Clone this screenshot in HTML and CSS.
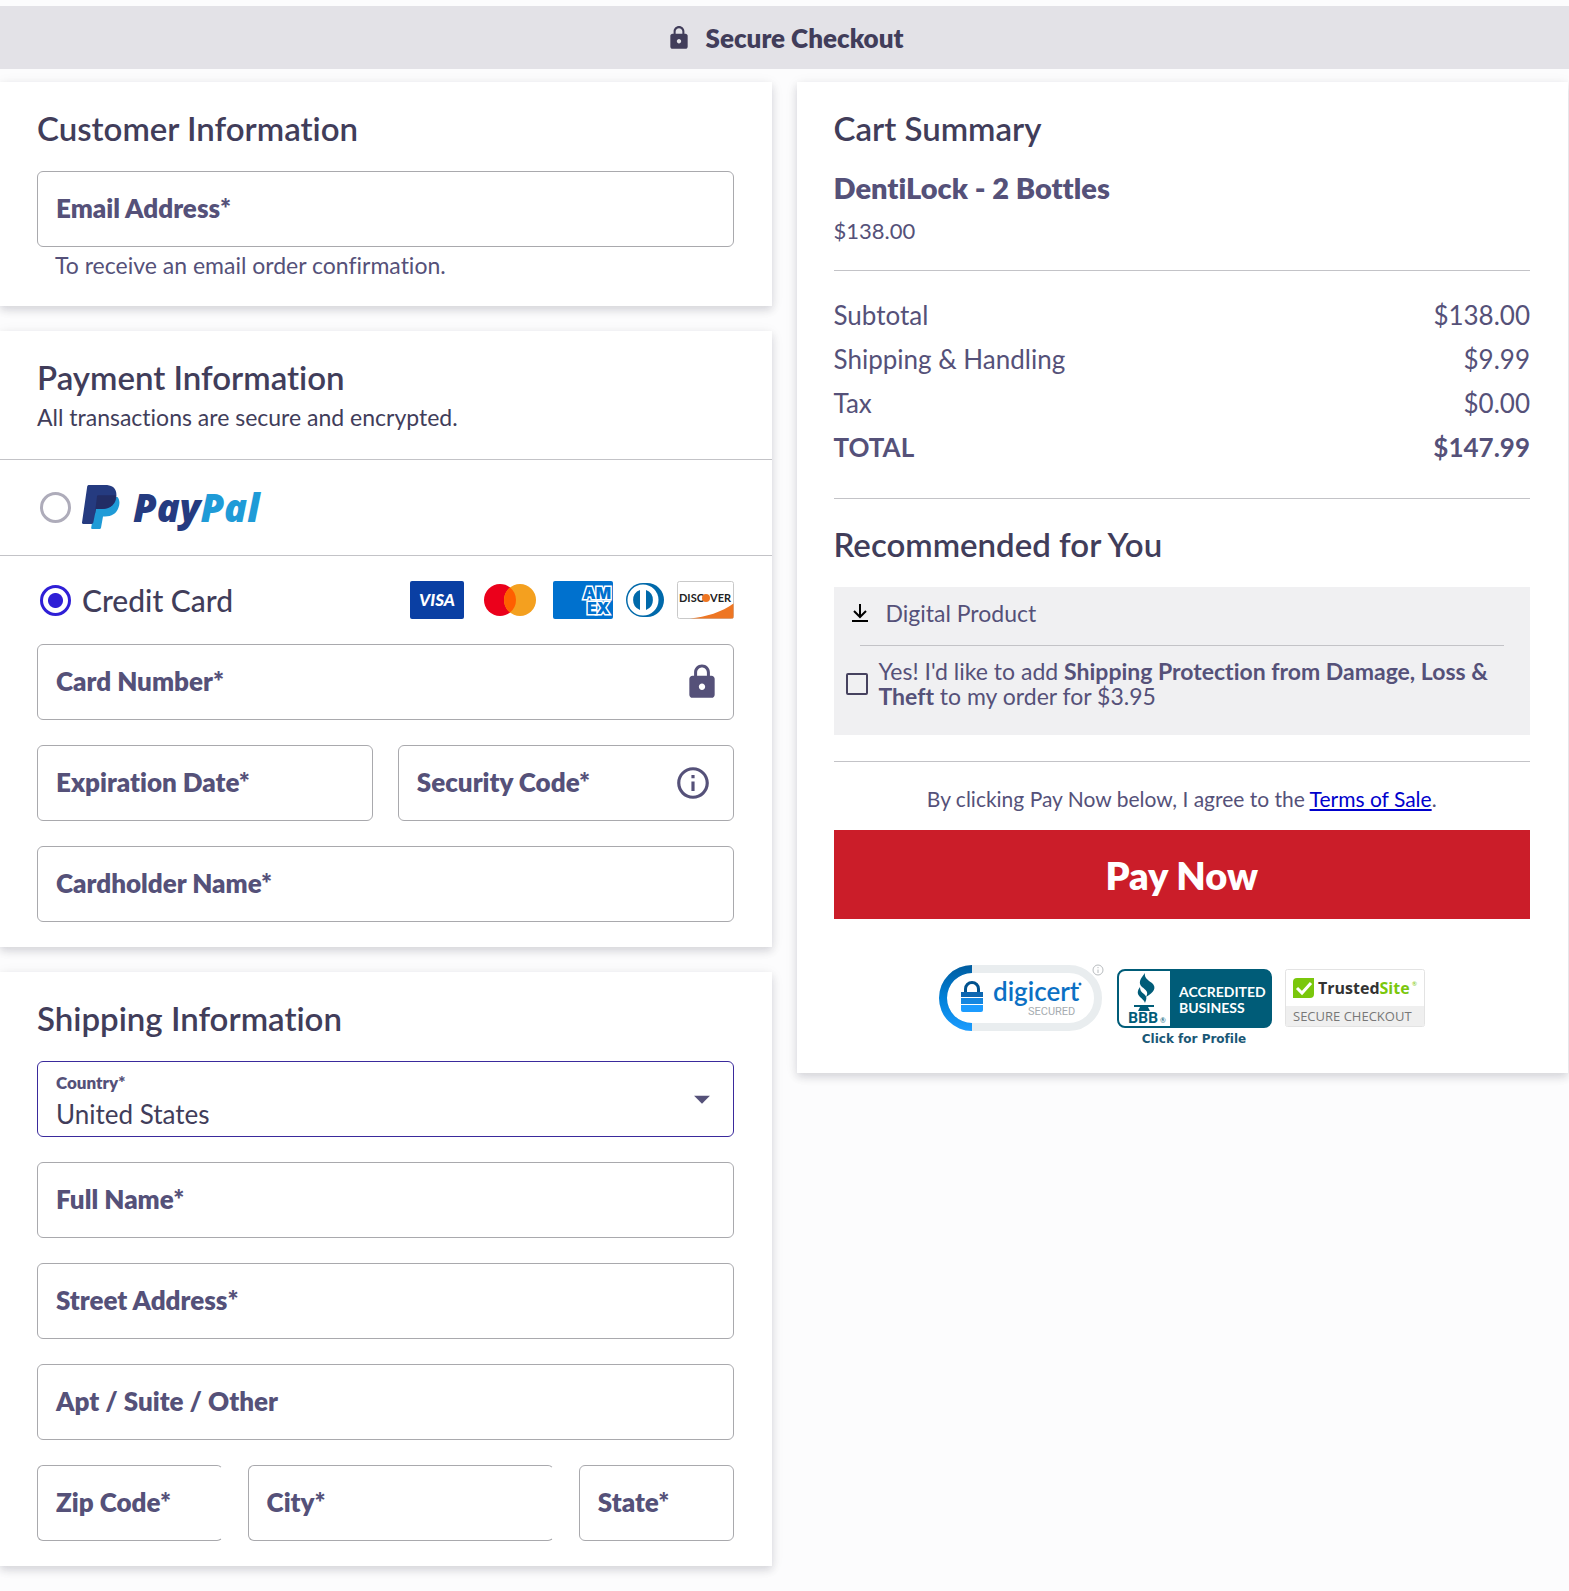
FILE: index.html
```html
<!DOCTYPE html>
<html lang="en">
<head>
  <meta charset="UTF-8">
  <meta name="viewport" content="width=device-width, initial-scale=1.0">
  <title>Secure Checkout</title>
  <link rel="stylesheet" href="styles.css">
</head>
<body>
  <header class="top-bar">
    <svg class="top-lock" viewBox="0 0 24 24" aria-hidden="true"><path fill="currentColor" d="M18 8h-1V6c0-2.76-2.24-5-5-5S7 3.24 7 6v2H6c-1.1 0-2 .9-2 2v10c0 1.1.9 2 2 2h12c1.1 0 2-.9 2-2V10c0-1.1-.9-2-2-2zm-6 9c-1.1 0-2-.9-2-2s.9-2 2-2 2 .9 2 2-.9 2-2 2zm3.1-9H8.9V6c0-1.71 1.39-3.1 3.1-3.1 1.71 0 3.1 1.39 3.1 3.1v2z"/></svg>
    <span>Secure Checkout</span>
  </header>

  <form class="checkout">
    <div class="column">
      <!-- Customer -->
      <section class="card">
        <h2>Customer Information</h2>
        <div class="field">
          <input type="email" id="email" required>
          <label for="email">Email Address*</label>
        </div>
        <p class="helper">To receive an email order confirmation.</p>
      </section>

      <!-- Payment -->
      <section class="card">
        <h2 class="tight">Payment Information</h2>
        <p class="subtitle">All transactions are secure and encrypted.</p>

        <div class="method method-paypal">
          <input type="radio" name="method" id="paypal" value="paypal">
          <label for="paypal" aria-label="PayPal">
            <svg width="190" height="46" viewBox="0 0 190 46">
              <path fill="#1f9bd7" d="M14 12h21.500c2.500 3 2.300 7 1 10.500-2 6-6.500 9-13.500 9h-2l-2 11.200c-.2.900-.8 1.300-1.600 1.300h-7.200c-.8 0-1.200-.5-1-1.300z"/>
              <path fill="#253b80" d="M7 0h16c6 0 10.500 2.300 11.200 7.500 1.500 10-4.700 16.500-14.700 16.500h-5.500l-2.700 13.600c-.2.900-.8 1.400-1.700 1.400H1.200C.4 39-.1 38.400 0 37.600L5.200 1.500C5.400.5 6.100 0 7 0z"/>
              <path fill="#222d65" d="M16 10.200h17.800c.5 8-4.800 13.800-14.300 13.800h-5.500l-1.300 6L15 11.300c.1-.7.4-1.100 1-1.100z"/>
              <text class="paypal-text" x="51" y="37" fill="#253b80">Pay<tspan fill="#1f9bd7">Pal</tspan></text>
            </svg>
          </label>
        </div>

        <div class="method">
          <input type="radio" name="method" id="credit" value="credit" checked>
          <label for="credit">Credit Card</label>
          <div class="brands">
            <svg width="54" height="38" viewBox="0 0 54 38">
              <rect width="54" height="38" rx="2" fill="#0a3fa3"/>
              <text class="visa-text" x="27" y="25" fill="#fff" text-anchor="middle">VISA</text>
            </svg>
            <svg width="63" height="38" viewBox="0 0 63 38">
              <circle cx="23" cy="19" r="16" fill="#eb001b"/>
              <circle cx="43" cy="19" r="16" fill="#f4a01f"/>
              <path fill="#ff5f00" d="M33 6.500a16 16 0 0 1 0 25 16 16 0 0 1 0-25z"/>
            </svg>
            <svg width="60" height="38" viewBox="0 0 60 38">
              <rect width="60" height="38" rx="2" fill="#0071ce"/>
              <g class="amex-text">
                <text x="30" y="18">AM</text>
                <text x="34" y="33">EX</text>
              </g>
            </svg>
            <svg width="38" height="38" viewBox="0 0 38 38">
              <path fill="#0069aa" d="M17 2h4a17 17 0 0 1 0 34h-4a17 17 0 0 1 0-34z"/>
              <circle cx="17" cy="19" r="15.500" fill="#fff"/>
              <path fill="#0069aa" d="M14 9a10.700 10.700 0 0 0 0 20zM20 9a10.700 10.700 0 0 1 0 20z"/>
            </svg>
            <svg width="57" height="38" viewBox="0 0 57 38">
              <rect x=".5" y=".5" width="56" height="37" rx="2" fill="#fff" stroke="#c9c9c9"/>
              <path fill="#ee7623" d="M13 37.500C29 36 45 31 56.500 22.500V36q0 1.500-1.500 1.500z"/>
              <g class="discover-text">
                <text x="2" y="21">DISC</text>
                <text x="33" y="21">VER</text>
              </g>
              <circle cx="29" cy="17" r="4" fill="#ee7623"/>
            </svg>
          </div>
        </div>

        <div class="fields">
          <div class="field">
            <input type="text" id="card-number" required>
            <label for="card-number">Card Number*</label>
            <svg class="field-icon" viewBox="0 0 24 24" aria-hidden="true"><path fill="currentColor" d="M18 8h-1V6c0-2.76-2.24-5-5-5S7 3.24 7 6v2H6c-1.1 0-2 .9-2 2v10c0 1.1.9 2 2 2h12c1.1 0 2-.9 2-2V10c0-1.1-.9-2-2-2zm-6 9c-1.1 0-2-.9-2-2s.9-2 2-2 2 .9 2 2-.9 2-2 2zm3.1-9H8.9V6c0-1.71 1.39-3.1 3.1-3.1 1.71 0 3.1 1.39 3.1 3.1v2z"/></svg>
          </div>
          <div class="row half">
            <div class="field">
              <input type="text" id="expiration" required>
              <label for="expiration">Expiration Date*</label>
            </div>
            <div class="field">
              <input type="text" id="security-code" required>
              <label for="security-code">Security Code*</label>
              <button type="button" class="field-icon info" aria-label="What is this?">
                <svg viewBox="0 0 24 24"><path fill="currentColor" d="M11 7h2v2h-2zm0 4h2v6h-2zm1-9C6.48 2 2 6.48 2 12s4.48 10 10 10 10-4.48 10-10S17.52 2 12 2zm0 18c-4.41 0-8-3.59-8-8s3.59-8 8-8 8 3.59 8 8-3.59 8-8 8z"/></svg>
              </button>
            </div>
          </div>
          <div class="field">
            <input type="text" id="cardholder" required>
            <label for="cardholder">Cardholder Name*</label>
          </div>
        </div>
      </section>

      <!-- Shipping -->
      <section class="card">
        <h2>Shipping Information</h2>
        <div class="fields">
          <div class="field filled">
            <select id="country">
              <option>United States</option>
              <option>Canada</option>
            </select>
            <label for="country">Country*</label>
            <svg class="field-icon" viewBox="0 0 24 24" aria-hidden="true"><path fill="currentColor" d="M7 10l5 5 5-5z"/></svg>
          </div>
          <div class="field">
            <input type="text" id="full-name" required>
            <label for="full-name">Full Name*</label>
          </div>
          <div class="field">
            <input type="text" id="street" required>
            <label for="street">Street Address*</label>
          </div>
          <div class="field">
            <input type="text" id="apt">
            <label for="apt">Apt / Suite / Other</label>
          </div>
          <div class="row address">
            <div class="field open">
              <input type="text" id="zip" required>
              <label for="zip">Zip Code*</label>
            </div>
            <div class="field open">
              <input type="text" id="city" required>
              <label for="city">City*</label>
            </div>
            <div class="field">
              <input type="text" id="state" required>
              <label for="state">State*</label>
            </div>
          </div>
        </div>
      </section>
    </div>

    <!-- Cart -->
    <div class="column">
      <section class="card">
        <h2>Cart Summary</h2>
        <h3>DentiLock - 2 Bottles</h3>
        <p class="item-price">$138.00</p>

        <table class="totals">
          <tbody>
            <tr><th scope="row">Subtotal</th><td>$138.00</td></tr>
            <tr><th scope="row">Shipping &amp; Handling</th><td>$9.99</td></tr>
            <tr><th scope="row">Tax</th><td>$0.00</td></tr>
            <tr class="total"><th scope="row">TOTAL</th><td>$147.99</td></tr>
          </tbody>
        </table>

        <div class="recommended">
          <h2>Recommended for You</h2>
          <div class="offer">
            <div class="offer-type">
              <svg width="18" height="20" viewBox="0 0 18 20" fill="none" stroke="#000" stroke-width="2"><path d="M9 1v12M3 8l6 6 6-6M1 18h16"/></svg>
              <span>Digital Product</span>
            </div>
            <div class="offer-choice">
              <input type="checkbox" id="protection">
              <label for="protection">Yes! I'd like to add <b>Shipping Protection from Damage, Loss &amp; Theft</b> to my order for $3.95</label>
            </div>
          </div>
        </div>

        <div class="pay">
          <p class="terms">By clicking Pay Now below, I agree to the <a href="#terms">Terms of Sale</a>.</p>
          <button type="submit" class="pay-button">Pay Now</button>
        </div>

        <div class="badges">
          <svg width="165" height="84" viewBox="0 0 165 84">
            <defs>
              <linearGradient id="dcBlue" x1="0" y1="0" x2="0" y2="1">
                <stop offset="0" stop-color="#005c9f"/>
                <stop offset=".5" stop-color="#0080d8"/>
                <stop offset="1" stop-color="#1c9cff"/>
              </linearGradient>
            </defs>
            <rect x="4" y="5" width="155" height="58" rx="29" fill="#fff" stroke="#e9edef" stroke-width="8"/>
            <path fill="url(#dcBlue)" d="M33 1a33 33 0 0 0 0 66v-8a25 25 0 0 1 0-50z"/>
            <path fill="none" stroke="#00528f" stroke-width="3" d="M26.500 30v-5a6.500 6.500 0 0 1 13 0v5"/>
            <path fill="#0d67b1" d="M22 28h22v5H22z"/>
            <path fill="#1587e0" d="M22 34h22v6H22z"/>
            <path fill="#1c9cff" d="M22 41h22v5q0 2-2 2H24q-2 0-2-2z"/>
            <text class="digicert-text" x="54" y="37" fill="#0b70c4">digicert</text>
            <text class="digicert-sub" x="89" y="51" fill="#a6acb1">SECURED</text>
            <circle cx="141" cy="20" r="1.500" fill="#0b70c4"/>
            <g fill="none" stroke="#b8bcbf" stroke-width="1"><circle cx="159" cy="6" r="5" fill="#fff"/><path d="M159 5.500v3.500M159 3v1.200"/></g>
          </svg>
          <svg width="155" height="84" viewBox="0 0 155 84">
            <rect x="1" y="6" width="153" height="57" rx="7" fill="#fff" stroke="#005c78" stroke-width="2"/>
            <path fill="#005c78" d="M53 6h94q7 0 7 7v43q0 7-7 7H53z"/>
            <path fill="#005c78" d="M28 9c-5 6-7 10-3 14 4 3 7 5 4 10 8-5 11-9 6-14-4-3-8-5-7-10zM23 23c-3 4-3 7 0 10 2 2 4 3 5 6 2-5 2-6-1-9-3-2-4-4-4-7zM17 41h20v2h-6l2 4H21l2-4h-6z"/>
            <text class="bbb-text" x="11" y="59" fill="#005c78">BBB</text>
            <text class="bbb-mark" x="43" y="59" fill="#005c78">®</text>
            <g class="bbb-label" fill="#fff">
              <text x="62" y="33">ACCREDITED</text>
              <text x="62" y="49">BUSINESS</text>
            </g>
            <text class="bbb-click" x="77" y="79" fill="#1a5876" text-anchor="middle">Click for Profile</text>
          </svg>
          <svg width="140" height="84" viewBox="0 0 140 84">
            <rect x=".5" y="5.500" width="139" height="57" rx="2" fill="#fff" stroke="#e3e3e3"/>
            <path fill="#efefef" d="M1 42h138v20H1z"/>
            <path fill="#7ac70c" d="M12 14h17v16q0 4-4 4H8V18q0-4 4-4z"/>
            <path fill="none" stroke="#fff" stroke-width="3" d="M12 24l5 5 9-10"/>
            <text class="trusted-text" x="33" y="30" fill="#333">Trusted<tspan fill="#7ac70c">Site</tspan></text>
            <text class="trusted-mark" x="127" y="22" fill="#7ac70c">®</text>
            <text class="trusted-sub" x="8" y="57" fill="#777">SECURE CHECKOUT</text>
          </svg>
        </div>
      </section>
    </div>
  </form>
</body>
</html>
```
FILE: styles.css
```css
* {
  box-sizing: border-box;
}

body {
  margin: 0;
  padding-top: 6px;
  font-family: Lato, "Liberation Sans", sans-serif;
  font-size: 23px;
  line-height: 32px;
  font-variant-ligatures: none;
  color: #555179;
  background-color: #fcfcfd;
}

h2, h3, p {
  margin: 0;
}

input, select, button {
  font-family: inherit;
  margin: 0;
}

b {
  font-weight: 700;
}

.top-bar {
  display: flex;
  justify-content: center;
  align-items: center;
  gap: 14px;
  padding: 16px 16px 15px;
  background-color: #e3e2e7;
  color: #413d5a;
  font-size: 26px;
  font-weight: 800;
}

.top-lock {
  width: 26px;
  height: 26px;
}

.checkout {
  display: grid;
  grid-template-columns: 1fr 1fr;
  align-items: start;
  gap: 25px;
  padding: 13px 1px 25px 0;
}

.column {
  display: grid;
  gap: 25px;
}

.card {
  padding: 26px 38px 25px 37px;
  background-color: #fff;
  box-shadow: 0 4px 8px rgba(30, 30, 50, 0.14), 0 2px 14px rgba(30, 30, 50, 0.06);
}

h2 {
  margin-bottom: 23px;
  font-size: 33px;
  line-height: 40px;
  font-weight: 600;
  color: #413d5a;
}

h2.tight {
  margin-bottom: 4px;
}

h3 {
  font-size: 29px;
  line-height: 34px;
  font-weight: 800;
}

/* Form fields */
.fields {
  display: grid;
  gap: 25px;
}

.row {
  display: grid;
  gap: 25px;
}

.half {
  grid-template-columns: 1fr 1fr;
}

.address {
  grid-template-columns: 60fr 99fr 50fr;
}

.field {
  position: relative;
}

.field input,
.field select {
  display: block;
  width: 100%;
  height: 76px;
  padding: 0 18px;
  border: 1px solid #a9a9ad;
  border-radius: 6px;
  background-color: #fff;
  color: #413d5a;
  font-size: 26px;
}

.field label {
  position: absolute;
  top: 21px;
  left: 19px;
  font-size: 26px;
  font-weight: 800;
  pointer-events: none;
}

.field.filled select {
  appearance: none;
  padding: 29px 50px 0 18px;
  border-color: #3a2a9c;
}

.field.filled label {
  top: 10px;
  font-size: 17px;
  line-height: 24px;
}

.field.open input {
  border-right-color: transparent;
}

.field-icon {
  position: absolute;
  top: 19px;
  right: 13px;
  width: 38px;
  height: 38px;
  color: #555179;
  pointer-events: none;
}

.field-icon.info {
  right: 22px;
  padding: 0;
  border: none;
  background: none;
  cursor: pointer;
  pointer-events: auto;
}

.info svg {
  display: block;
}

.helper {
  margin-top: 2px;
  padding-left: 18px;
}

.subtitle {
  padding-bottom: 26px;
  color: #413d5a;
}

/* Payment methods */
.method {
  display: flex;
  align-items: center;
  gap: 11px;
  height: 89px;
  margin: 0 -38px 0 -37px;
  padding: 0 38px 0 40px;
  border-top: 1px solid #c3c3c7;
}

.method-paypal {
  height: 96px;
}

.method input {
  appearance: none;
  width: 31px;
  height: 31px;
  border: 3px solid #aeacba;
  border-radius: 50%;
}

.method input:checked {
  border-color: #2f1fd6;
  background: radial-gradient(circle, #2f1fd6 7px, #fff 8px);
}

.method label {
  font-size: 30px;
  font-weight: 500;
  color: #413d5a;
}

.method svg {
  display: block;
}

.method label svg {
  overflow: visible;
}

.brands {
  display: flex;
  gap: 13px;
  margin-left: auto;
}

.paypal-text {
  font-family: "Open Sans", sans-serif;
  font-size: 38px;
  font-weight: 800;
  font-style: italic;
}

.visa-text {
  font-size: 17px;
  font-weight: 900;
  font-style: italic;
}

.amex-text {
  font-family: Inter, sans-serif;
  font-size: 16px;
  font-weight: 900;
  fill: #0071ce;
  stroke: #fff;
  stroke-width: 3px;
  paint-order: stroke;
}

.discover-text {
  font-size: 11px;
  font-weight: 700;
  fill: #222;
}

/* Cart */
.item-price {
  margin-top: 10px;
  padding-bottom: 23px;
  border-bottom: 1px solid #c3c3c7;
  font-size: 22px;
}

.totals {
  width: 100%;
  margin: 22px 0 29px;
  border-collapse: collapse;
  font-size: 26px;
  line-height: 44px;
}

.totals th,
.totals td {
  padding: 0;
  font-weight: 400;
  text-align: left;
}

.totals td {
  text-align: right;
}

.totals .total th,
.totals .total td {
  font-weight: 700;
}

.recommended {
  padding: 25px 0 26px;
  border-top: 1px solid #c3c3c7;
  border-bottom: 1px solid #c3c3c7;
}

.offer {
  padding: 10px 12px 26px;
  background-color: #f0f0f2;
}

.offer-type {
  display: flex;
  align-items: center;
  gap: 17px;
  margin: 0 14px;
  padding-bottom: 16px;
  border-bottom: 1px solid #c3c3c7;
}

.offer-type svg {
  margin-left: -9px;
}

.offer-choice {
  display: flex;
  align-items: center;
  gap: 11px;
  margin-top: 13px;
  line-height: 25px;
}

.offer-choice input {
  appearance: none;
  flex: none;
  width: 22px;
  height: 22px;
  border: 2px solid #46425f;
  border-radius: 2px;
}

.pay {
  padding-top: 23px;
}

.terms {
  font-size: 21px;
  line-height: 28px;
  text-align: center;
}

.terms a {
  color: #0000cc;
}

.pay-button {
  width: 100%;
  height: 89px;
  margin-top: 17px;
  border: none;
  background-color: #cb1d29;
  color: #fff;
  font-size: 38px;
  font-weight: 800;
  cursor: pointer;
}

.badges {
  display: flex;
  justify-content: center;
  gap: 13px;
  margin-top: 45px;
}

.badges svg {
  display: block;
}

.digicert-text {
  font-size: 26px;
  font-weight: 600;
}

.digicert-sub {
  font-family: Roboto, sans-serif;
  font-size: 11px;
}

.bbb-text {
  font-size: 15px;
  font-weight: 900;
}

.bbb-mark {
  font-size: 7px;
}

.bbb-label {
  font-size: 14px;
  font-weight: 700;
}

.bbb-click {
  font-family: "DejaVu Sans", sans-serif;
  font-size: 12px;
  font-weight: 700;
}

.trusted-text {
  font-family: "Open Sans", sans-serif;
  font-size: 16px;
  font-weight: 700;
}

.trusted-mark {
  font-size: 6px;
}

.trusted-sub {
  font-family: "Open Sans", sans-serif;
  font-size: 13px;
}
```
